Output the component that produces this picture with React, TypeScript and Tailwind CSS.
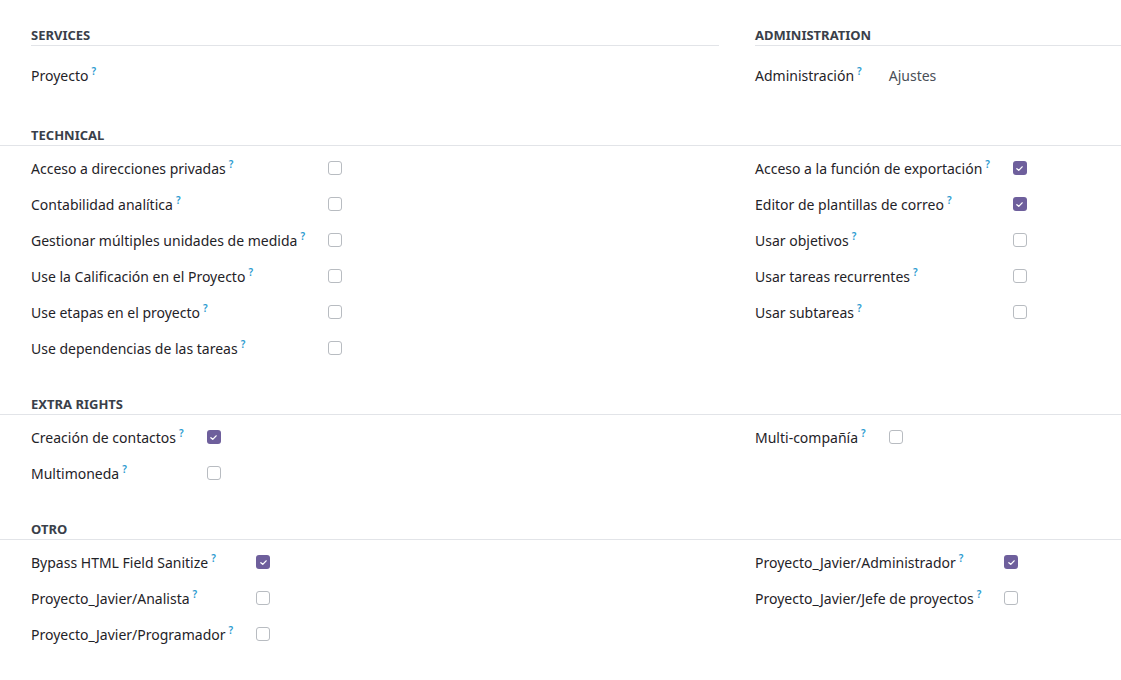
import React from "react"

type Field = { label: string; checked?: boolean }

function Help() {
  return <sup className="ml-[3px] text-[10px] font-semibold text-[#2d9bd0] relative -top-[4px]">?</sup>
}

function Box({ checked }: { checked?: boolean }) {
  if (checked) {
    return (
      <span className="flex h-[14px] w-[14px] items-center justify-center rounded-[3px] bg-[#6e5f9c]">
        <svg viewBox="0 0 12 12" className="h-[9px] w-[9px]">
          <path d="M2.5 6.2 L5 8.5 L9.5 3.8" fill="none" stroke="white" strokeWidth="1.8" strokeLinecap="round" strokeLinejoin="round" />
        </svg>
      </span>
    )
  }
  return <span className="block h-[14px] w-[14px] rounded-[3px] border border-[#b8bcc1] bg-white" />
}

function Header({ title }: { title: string }) {
  return (
    <div className="h-[21px] border-b border-[#e2e4e8] pl-[31px] text-[13px] font-bold leading-[20px] text-[#3a3f4a] uppercase">
      {title}
    </div>
  )
}

function FieldList({ fields }: { fields: Field[] }) {
  return (
    <div className="grid grid-cols-[auto_1fr] content-start">
      {fields.map((f) => (
        <React.Fragment key={f.label}>
          <div className="flex h-[36px] items-center pr-[23px] text-[#1f2328]">
            <span>{f.label}</span>
            <Help />
          </div>
          <div className="flex h-[36px] items-center">
            <Box checked={f.checked} />
          </div>
        </React.Fragment>
      ))}
    </div>
  )
}

function Group({ title, left, right }: { title: string; left: Field[]; right: Field[] }) {
  return (
    <section className="mt-7">
      <Header title={title} />
      <div className="flex pt-1 pl-[31px]">
        <div className="w-[724px]">
          <FieldList fields={left} />
        </div>
        <div className="flex-1">
          <FieldList fields={right} />
        </div>
      </div>
    </section>
  )
}

export default function App() {
  return (
    <div className="min-h-screen w-[1121px] overflow-hidden bg-white pt-[25px] text-[14px] font-['Noto_Sans','Open_Sans',sans-serif]">
      <div className="flex pb-[4px] pl-[31px]">
        <div className="w-[688px]">
          <div className="h-[21px] border-b border-[#e2e4e8] text-[13px] font-bold leading-[20px] text-[#3a3f4a]">SERVICES</div>
          <div className="mt-[11px] flex h-[36px] items-center text-[#1f2328]">
            <span>Proyecto</span>
            <Help />
          </div>
        </div>
        <div className="ml-[36px] flex-1">
          <div className="h-[21px] border-b border-[#e2e4e8] text-[13px] font-bold leading-[20px] text-[#3a3f4a]">ADMINISTRATION</div>
          <div className="mt-[11px] flex h-[36px] items-center text-[#1f2328]">
            <span>Administración</span>
            <Help />
            <span className="ml-[27px] text-[#4a4f57]">Ajustes</span>
          </div>
        </div>
      </div>

      <Group
        title="Technical"
        left={[
          { label: "Acceso a direcciones privadas" },
          { label: "Contabilidad analítica" },
          { label: "Gestionar múltiples unidades de medida" },
          { label: "Use la Calificación en el Proyecto" },
          { label: "Use etapas en el proyecto" },
          { label: "Use dependencias de las tareas" },
        ]}
        right={[
          { label: "Acceso a la función de exportación", checked: true },
          { label: "Editor de plantillas de correo", checked: true },
          { label: "Usar objetivos" },
          { label: "Usar tareas recurrentes" },
          { label: "Usar subtareas" },
        ]}
      />

      <Group
        title="Extra Rights"
        left={[{ label: "Creación de contactos", checked: true }, { label: "Multimoneda" }]}
        right={[{ label: "Multi-compañía" }]}
      />

      <Group
        title="Otro"
        left={[
          { label: "Bypass HTML Field Sanitize", checked: true },
          { label: "Proyecto_Javier/Analista" },
          { label: "Proyecto_Javier/Programador" },
        ]}
        right={[
          { label: "Proyecto_Javier/Administrador", checked: true },
          { label: "Proyecto_Javier/Jefe de proyectos" },
        ]}
      />
    </div>
  )
}
